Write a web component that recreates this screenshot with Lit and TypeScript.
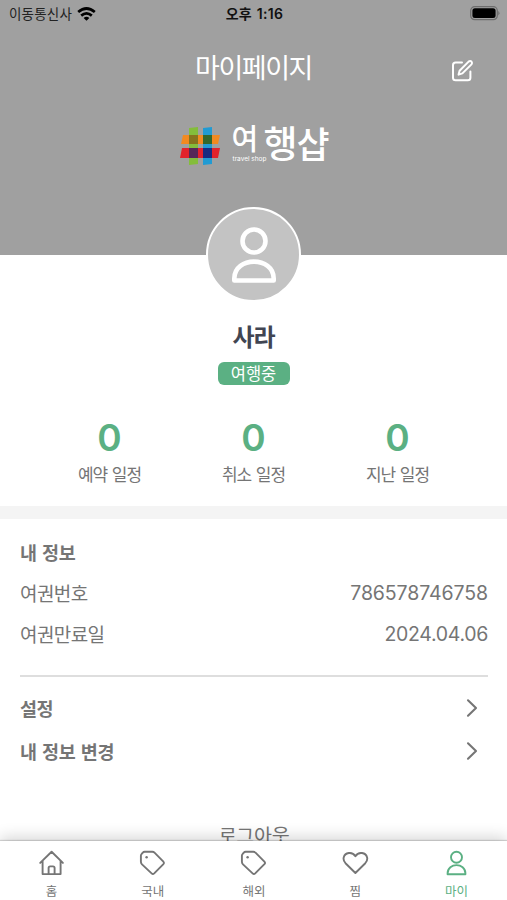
import { LitElement, html, svg, css } from "lit";
import { customElement } from "lit/decorators.js";
import { classMap } from "lit/directives/class-map.js";

const house = svg`<path d="M2.2 12.9 13.6 1.8 24.9 12.9M4.6 10.8V24.1H22.6V10.8M10.6 24V18Q10.6 16.4 12.2 16.4H15Q16.6 16.4 16.6 18V24"/>`;
const tag = svg`<path d="M5.6 1.8H13.4Q14.6 1.8 15.5 2.7L24.4 11.6Q25.6 12.9 24.4 14.2L15.2 23.4Q13.9 24.6 12.6 23.4L3 14.4Q1.9 13.3 1.9 11.8V5.8Q1.9 4.7 2.7 3.9L3.8 2.6Q4.5 1.8 5.6 1.8Z"/><circle class="dot" cx="7.6" cy="7.2" r="1.2"/>`;
const heart = svg`<path d="M13.4 23 3.5 13.2Q1 10.5 1.7 7.4C3 2.6 10.1 1 13.4 6.2C16.7 1 23.8 2.6 25.1 7.4Q25.8 10.5 23.3 13.2Z"/>`;
const person = svg`<circle cx="13.5" cy="7.2" r="5.5"/><path d="M4.6 24.3V23.3C4.6 12.4 22.4 12.4 22.4 23.3V24.3Z"/>`;

const tabs = [
  { label: "홈", icon: house, active: false },
  { label: "국내", icon: tag, active: false },
  { label: "해외", icon: tag, active: false },
  { label: "찜", icon: heart, active: false },
  { label: "마이", icon: person, active: true },
];
const stats = ["예약 일정", "취소 일정", "지난 일정"];

@customElement("app-root")
export class AppRoot extends LitElement {
  static styles = css`
    :host {
      display: flex;
      flex-direction: column;
      height: 900px;
      overflow: hidden;
      background: #fff;
      color: #757575;
      font-family: Inter, "Noto Sans CJK KR", sans-serif;
    }
    svg { display: block; flex: none; }
    .content { flex: 1; min-height: 0; overflow: hidden; }
    .hero { height: 255px; background: #a0a0a0; color: #fff; }
    .status {
      display: grid;
      grid-template-columns: 1fr auto 1fr;
      align-items: center;
      height: 27px;
      padding: 0 7px 0 9px;
      color: #111;
      font-size: 13.5px;
      line-height: 26px;
    }
    .carrier { display: flex; align-items: center; gap: 5px; letter-spacing: 0.2px; color: #222; }
    .clock { font-size: 14px; font-weight: 600; letter-spacing: 0.3px; word-spacing: 1px; }
    .battery { justify-self: end; }
    .bar {
      display: grid;
      grid-template-columns: 1fr auto 1fr;
      align-items: center;
      height: 80px;
      padding-right: 33px;
      padding-left: 33px;
    }
    .title { grid-column: 2; margin-top: 3px; font-size: 27px; line-height: 40px; letter-spacing: -1.45px; }
    .edit { justify-self: end; margin-top: 6px; }
    .brand { display: flex; justify-content: center; height: 58px; padding-top: 19px; gap: 12px; }
    .wordmark { display: flex; width: 96px; font-weight: 500; white-space: nowrap; }
    .lead { display: flex; flex-direction: column; width: 33px; }
    .first { font-size: 29px; line-height: 27px; height: 29px; }
    .tagline { padding-left: 1px; font-size: 6.5px; line-height: 8px; font-weight: 400; }
    .second { margin-left: -1px; font-size: 37px; line-height: 38px; }
    .third { margin-left: -1px; font-size: 36px; line-height: 39px; }
    .profile { display: flex; flex-direction: column; align-items: center; height: 251px; }
    .avatar {
      display: grid;
      place-items: center;
      box-sizing: border-box;
      flex: none;
      width: 95px;
      height: 95px;
      margin-top: -48px;
      border: 2.5px solid #fff;
      border-radius: 50%;
      background: #c3c3c3;
      position: relative;
    }
    .name { margin-top: 16px; font-size: 24px; font-weight: 700; line-height: 40px; letter-spacing: -1.2px; color: #414552; }
    .badge {
      width: 72px;
      height: 23px;
      margin-top: 4px;
      border-radius: 6px;
      background: #5bb083;
      color: #fff;
      font-size: 16.5px;
      line-height: 24px;
      text-align: center;
    }
    .stats { display: grid; grid-template-columns: repeat(3, 144px); margin-top: 31px; text-align: center; }
    .count { font-size: 37px; font-weight: 600; line-height: 43px; color: #5bb083; }
    .caption { font-size: 17px; line-height: 32px; letter-spacing: -1.1px; word-spacing: 1px; }
    .band { height: 13px; background: #f4f4f4; }
    .info { padding: 12px 19px 0 20px; }
    .row { display: flex; align-items: center; justify-content: space-between; height: 41px; font-size: 19px; letter-spacing: -0.6px; }
    .value { font-size: 19.5px; letter-spacing: -0.1px; padding-top: 1px; }
    .date { letter-spacing: -0.3px; }
    .strong { font-size: 18.5px; font-weight: 700; letter-spacing: -0.4px; word-spacing: 1.5px; }
    .rule { height: 2px; margin: 21px 0 9px; background: #dedede; }
    .link { height: 43px; }
    .link svg { margin-right: 10px; }
    .logout { margin-top: 49px; text-align: center; font-size: 19.5px; line-height: 30px; letter-spacing: -0.3px; }
    .tabs {
      display: grid;
      grid-template-columns: repeat(5, 1fr);
      flex: none;
      height: 59px;
      position: relative;
      padding-left: 1px;
      background: #fff;
      box-shadow: 0 -1px 1px rgba(0, 0, 0, 0.15), 0 -4px 14px rgba(0, 0, 0, 0.16);
    }
    .tab { display: flex; flex-direction: column; align-items: center; padding-top: 9px; font-size: 12.5px; line-height: 18px; }
    .tab svg { margin-bottom: 6px; fill: none; stroke: currentColor; stroke-width: 1.9; stroke-linejoin: round; stroke-linecap: round; }
    .tab .dot { fill: currentColor; stroke: none; }
    .active { color: #5bb083; }
  `;

  render() {
    const chevron = html`<svg width="12" height="20" viewBox="0 0 12 20" fill="none" stroke="#757575" stroke-width="2.1" stroke-linecap="round" stroke-linejoin="round"><path d="M2 2.3 10 10 2 17.7"/></svg>`;
    return html`
      <div class="content">
        <div class="hero">
          <div class="status">
            <div class="carrier">이동통신사
              <svg width="19" height="14" viewBox="0 0 19 14" fill="none" stroke="#000" stroke-width="2.7"><path d="M1.2 5.1Q9.5-2.1 17.8 5.1M4.2 8.6Q9.5 4.2 14.8 8.6"/><path d="M6.6 10.9Q9.5 8.6 12.4 10.9L9.5 13.8Z" fill="#000" stroke="none"/></svg>
            </div>
            <div class="clock">오후 1:16</div>
            <svg class="battery" width="30" height="15" viewBox="0 0 30 15"><rect x=".7" y=".7" width="26.6" height="13" rx="4" fill="none" stroke="#6d6d6d" stroke-width="1.2"/><rect x="2.4" y="2.3" width="23.2" height="9.8" rx="2.5"/><path d="M28.3 5Q30.6 7.2 28.3 9.4Z" fill="#6d6d6d"/></svg>
          </div>
          <div class="bar">
            <div class="title">마이페이지</div>
            <svg class="edit" width="23" height="23" viewBox="0 0 23 23" fill="none" stroke="#fff" stroke-width="2" stroke-linecap="round" stroke-linejoin="round"><path d="M11 3.6H4.6Q2 3.6 2 6.2V18.7Q2 21.2 4.6 21.2H16.8Q19.4 21.2 19.4 18.7V12.5M7.6 15.6 8.6 11.7 17.6 2.6Q19.1 1.4 20.5 2.6 21.6 4 20.5 5.4L11.4 14.4Z"/></svg>
          </div>
          <div class="brand">
            <svg width="40" height="40" viewBox="0 0 40 40">
              <path fill="#84bd3b" d="M9 2 18 1V38L9 39Z"/><path fill="#219bd3" d="M23 2 32 1V38L23 39Z"/>
              <path fill="#f28a20" d="M3 9H40L38 18H1Z"/><path fill="#e3222b" d="M2 22H40L38 32H0Z"/>
              <path fill="#86731e" d="M9 9H18V18H9Z"/><path fill="#34672c" d="M23 9H32V18H23Z"/>
              <path fill="#562758" d="M9 22H18V32H9Z"/><path fill="#182b80" d="M23 22H32V32H23Z"/>
            </svg>
            <div class="wordmark">
              <div class="lead"><span class="first">여</span><span class="tagline">travel shop</span></div>
              <span class="second">행</span><span class="third">샵</span>
            </div>
          </div>
        </div>
        <div class="profile">
          <div class="avatar">
            <svg width="46" height="58" viewBox="0 0 46 58" fill="none" stroke="#fff" stroke-width="4.6" stroke-linejoin="round"><circle cx="23" cy="15" r="11.5"/><path d="M3.3 54.5V52.5C3.3 30 42.7 30 42.7 52.5V54.5Z"/></svg>
          </div>
          <div class="name">사라</div>
          <div class="badge">여행중</div>
          <div class="stats">
            ${stats.map((s) => html`<div><div class="count">0</div><div class="caption">${s}</div></div>`)}
          </div>
        </div>
        <div class="band"></div>
        <div class="info">
          <div class="row strong">내 정보</div>
          <div class="row"><span>여권번호</span><span class="value">786578746758</span></div>
          <div class="row"><span>여권만료일</span><span class="value date">2024.04.06</span></div>
          <div class="rule"></div>
          <div class="row strong link"><span>설정</span>${chevron}</div>
          <div class="row strong link"><span>내 정보 변경</span>${chevron}</div>
          <div class="logout">로그아웃</div>
        </div>
      </div>
      <nav class="tabs">
        ${tabs.map((t) => html`<div class=${classMap({ tab: true, active: t.active })}>
          <svg width="27" height="27" viewBox="0 0 27 27">${t.icon}</svg><span>${t.label}</span>
        </div>`)}
      </nav>
    `;
  }
}
